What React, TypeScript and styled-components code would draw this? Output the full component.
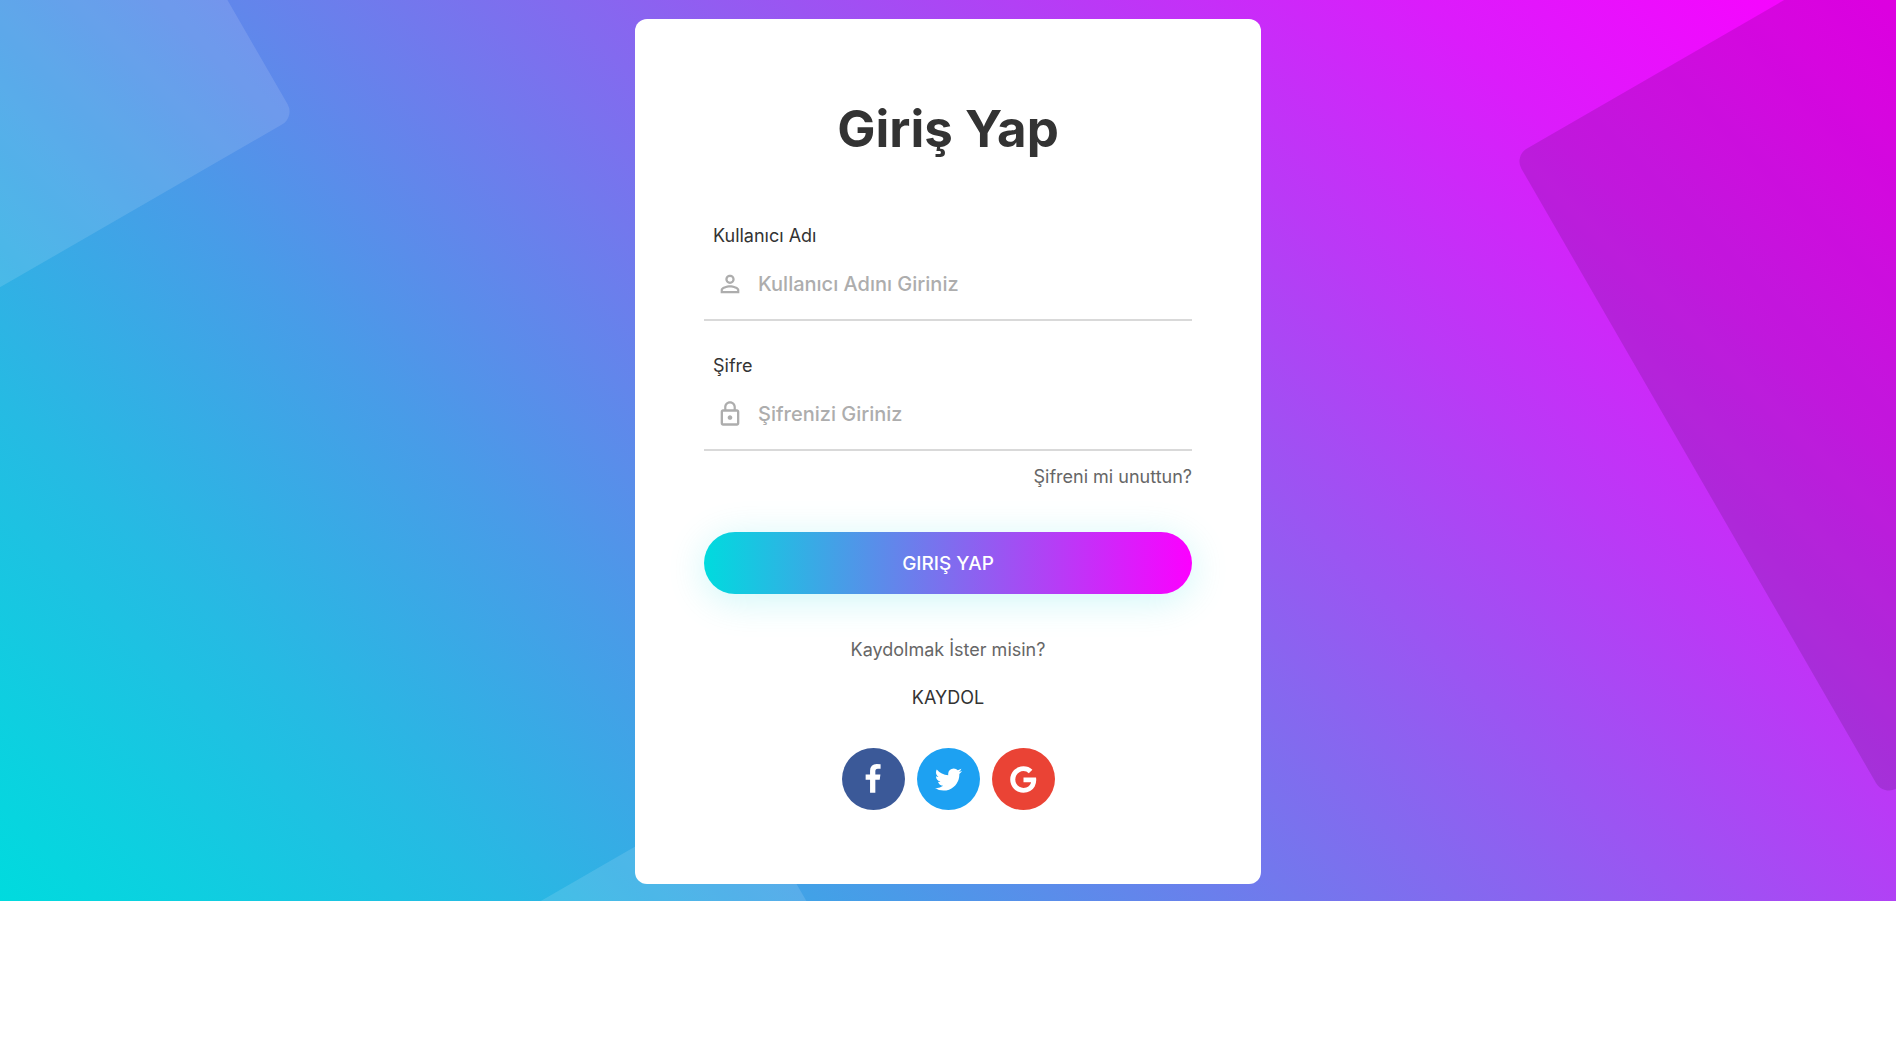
import React from "react";
import styled, { createGlobalStyle } from "styled-components";
import { MdLockOutline, MdPersonOutline } from "react-icons/md";

const GlobalStyle = createGlobalStyle`
  *, *::before, *::after { box-sizing: border-box; }
  body {
    margin: 0;
    background: #fff;
    color: #333;
    font-family: Inter, "Open Sans", sans-serif;
  }
`;

const Hero = styled.main`
  position: relative;
  display: flex;
  justify-content: center;
  padding: 19px 16px 17px;
  overflow: hidden;
  background: linear-gradient(
    45deg,
    #00dbde,
    #0ecfe0 7%,
    #26bae3 18%,
    #499be8 32%,
    #8b63f0 55%,
    #ba39f6 71%,
    #db1cfb 83%,
    #f407fe 95%,
    #fc00ff
  );
`;

const Backdrop = styled.svg`
  position: absolute;
  inset: 0;
  width: 100%;
  height: 100%;
`;

const Card = styled.form`
  position: relative;
  display: flex;
  flex-direction: column;
  width: 100%;
  max-width: 626px;
  padding: 81px 69px 74px;
  border-radius: 12px;
  background: #fff;
`;

const Title = styled.h1`
  margin: 0 0 61px;
  font-size: 51px;
  font-weight: 700;
  line-height: 58px;
  text-align: center;
`;

const Field = styled.div`
  & + & {
    margin-top: 28px;
  }
`;

const Label = styled.label`
  display: block;
  padding-left: 9px;
  font-size: 18px;
  line-height: 33px;
`;

const InputRow = styled.div`
  display: flex;
  align-items: center;
  gap: 14px;
  height: 69px;
  padding: 0 0 4px 12px;
  border-bottom: 2px solid #d9d9d9;
  color: #adadad;
  font-size: 28px;

  svg {
    flex: none;
  }
`;

const Input = styled.input`
  flex: 1;
  min-width: 0;
  height: 100%;
  padding: 0;
  border: 0;
  outline: 0;
  background: transparent;
  color: #333;
  font: 500 20px Inter, "Open Sans", sans-serif;

  &::placeholder {
    color: #adadad;
    opacity: 1;
  }
`;

const TextLink = styled.a<{ $tone: string }>`
  color: ${(p) => p.$tone};
  font-size: 18px;
  line-height: 30px;
  text-decoration: none;
`;

const ForgotRow = styled.div`
  display: flex;
  justify-content: flex-end;
  padding: 11px 0 40px;
`;

const SubmitButton = styled.button`
  height: 62px;
  border: 0;
  border-radius: 31px;
  background: linear-gradient(to right, #00dbde, #fc00ff);
  box-shadow: 0 6px 38px rgba(3, 216, 222, 0.2);
  color: #fff;
  font: 500 19px Inter, "Open Sans", sans-serif;
  cursor: pointer;
`;

const SignUp = styled.div`
  display: flex;
  flex-direction: column;
  align-items: center;
  gap: 18px;
  padding: 41px 0 35px;
`;

const Prompt = styled.span`
  color: #666;
  font-size: 18px;
  line-height: 30px;
`;

const Socials = styled.nav`
  display: flex;
  justify-content: center;
  gap: 12px;
`;

const SocialLink = styled.a<{ $color: string }>`
  display: flex;
  align-items: center;
  justify-content: center;
  width: 63px;
  height: 62px;
  border-radius: 50%;
  background: ${(p) => p.$color};

  svg {
    height: 31px;
    fill: #fff;
  }
`;

const socials = [
  {
    name: "Facebook",
    color: "#3b5998",
    box: "0 0 1024 1792",
    path: "M959 12v264h-157q-86 0-116 36t-30 108v189h293l-39 296h-254v759h-306v-759h-255v-296h255v-218q0-186 104-288.5t277-102.5q147 0 228 12z",
  },
  {
    name: "Twitter",
    color: "#1da1f2",
    box: "0 0 1792 1792",
    path: "M1684 408q-67 98-162 167 1 14 1 42 0 130-38 259.5t-115.5 248.5-184.5 210.5-258 146-323 54.5q-271 0-496-145 35 4 78 4 225 0 401-138-105-2-188-64.5t-114-159.5q33 5 61 5 43 0 85-11-112-23-185.5-111.5t-73.5-205.5v-4q68 38 146 41-66-44-105-115t-39-154q0-88 44-163 121 149 294.5 238.5t371.5 99.5q-8-38-8-74 0-134 94.5-228.5t228.5-94.5q140 0 236 102 109-21 205-78-37 115-142 178 93-10 186-50z",
  },
  {
    name: "Google",
    color: "#ea4335",
    box: "0 0 1792 1792",
    path: "M896 786h725q12 67 12 128 0 217-91 387.5t-259.5 266.5-386.5 96q-157 0-299-60.5t-245-163.5-163.5-245-60.5-299 60.5-299 163.5-245 245-163.5 299-60.5q300 0 515 201l-209 201q-123-119-306-119-129 0-238.5 65t-173.5 176.5-64 243.5 64 243.5 173.5 176.5 238.5 65q87 0 160-24t120-60 82-82 51.5-87 22.5-78h-436v-264z",
  },
];

export default function App() {
  return (
    <>
      <GlobalStyle />
      <Hero>
        <Backdrop viewBox="0 0 1896 901" preserveAspectRatio="xMidYMid slice" aria-hidden="true">
          <rect x="-600" y="-600" width="600" height="600" rx="15" fill="#fff" fillOpacity="0.12" transform="translate(295 117) rotate(-30)" />
          <rect width="740" height="739" rx="15" fill="#000" fillOpacity="0.12" transform="translate(1514 156) rotate(-30)" />
          <rect x="-500" width="500" height="500" rx="15" fill="#fff" fillOpacity="0.12" transform="translate(740 786) rotate(-30)" />
        </Backdrop>
        <Card onSubmit={(e) => e.preventDefault()}>
          <Title>Giriş Yap</Title>
          <Field>
            <Label htmlFor="username">Kullanıcı Adı</Label>
            <InputRow>
              <MdPersonOutline aria-hidden="true" />
              <Input id="username" type="text" placeholder="Kullanıcı Adını Giriniz" />
            </InputRow>
          </Field>
          <Field>
            <Label htmlFor="password">Şifre</Label>
            <InputRow>
              <MdLockOutline aria-hidden="true" />
              <Input id="password" type="password" placeholder="Şifrenizi Giriniz" />
            </InputRow>
          </Field>
          <ForgotRow>
            <TextLink href="#forgot" $tone="#666">Şifreni mi unuttun?</TextLink>
          </ForgotRow>
          <SubmitButton type="submit">GIRIŞ YAP</SubmitButton>
          <SignUp>
            <Prompt>Kaydolmak İster misin?</Prompt>
            <TextLink href="#signup" $tone="#333">KAYDOL</TextLink>
          </SignUp>
          <Socials>
            {socials.map((s) => (
              <SocialLink key={s.name} href={`#${s.name.toLowerCase()}`} $color={s.color} aria-label={s.name}>
                <svg viewBox={s.box} aria-hidden="true">
                  <path d={s.path} />
                </svg>
              </SocialLink>
            ))}
          </Socials>
        </Card>
      </Hero>
    </>
  );
}
